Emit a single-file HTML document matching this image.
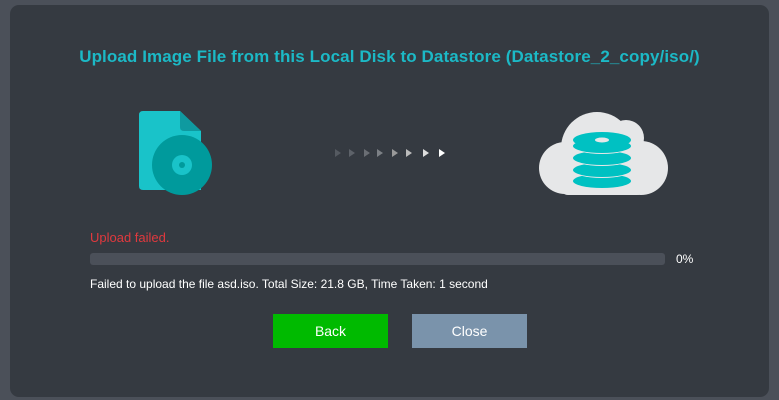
<!DOCTYPE html>
<html><head><style>
body{margin:0;width:779px;height:400px;background:#4b5059;font-family:"Liberation Sans",sans-serif;overflow:hidden;position:relative}
.dlg{position:absolute;left:10px;top:5px;width:759px;height:392px;background:#353a41;border-radius:9px}
.t{position:absolute;left:0;width:779px;top:47px;text-align:center;color:#1cb9c6;font-weight:bold;font-size:17px;letter-spacing:0.1px}
.a{position:absolute;top:149px;width:0;height:0;border-top:4px solid transparent;border-bottom:4px solid transparent;border-left:6px solid #fff}
</style></head><body>
<div class="dlg"></div>
<div class="t">Upload Image File from this Local Disk to Datastore (Datastore_2_copy/iso/)</div>
<svg style="position:absolute;left:0;top:0" width="779" height="400">
<path d="M143 111 H180 L201 131 V190 H143 Q139 190 139 186 V115 Q139 111 143 111Z" fill="#19c3c9"/>
<path d="M180 111 L201 131 H184 Q180 131 180 127Z" fill="#0f9aa0"/>
<ellipse cx="182" cy="165" rx="30" ry="30" fill="#009a9c"/>
<circle cx="182" cy="165" r="10" fill="#19c3c9"/>
<circle cx="182" cy="165" r="3" fill="#009a9c"/>
<g fill="#e6e7e8">
<circle cx="565" cy="168" r="26"/>
<circle cx="597" cy="148" r="36"/>
<circle cx="626" cy="138" r="18"/>
<circle cx="641" cy="168" r="27"/>
<rect x="560" y="160" width="85" height="35" rx="8"/>
</g>
<ellipse cx="602" cy="181" rx="29" ry="7" fill="#00c1c2"/>
<ellipse cx="602" cy="170" rx="30" ry="8" fill="#e6e7e8"/>
<ellipse cx="602" cy="170" rx="29" ry="7" fill="#00c1c2"/>
<ellipse cx="602" cy="158" rx="30" ry="8" fill="#e6e7e8"/>
<ellipse cx="602" cy="158" rx="29" ry="7" fill="#00c1c2"/>
<ellipse cx="602" cy="146" rx="30" ry="8" fill="#e6e7e8"/>
<ellipse cx="602" cy="146" rx="29" ry="7" fill="#00c1c2"/>
<ellipse cx="602" cy="140" rx="29" ry="8" fill="#00c1c2"/>
<ellipse cx="602" cy="140" rx="7" ry="2.5" fill="#e6e7e8"/>
</svg>
<div class="a" style="left:335px;border-left-color:#555a61"></div>
<div class="a" style="left:349px;border-left-color:#5d6269"></div>
<div class="a" style="left:364px;border-left-color:#6a6e74"></div>
<div class="a" style="left:377px;border-left-color:#7c8085"></div>
<div class="a" style="left:392px;border-left-color:#999"></div>
<div class="a" style="left:406px;border-left-color:#bbb"></div>
<div class="a" style="left:423px;border-left-color:#ddd"></div>
<div class="a" style="left:439px;border-left-color:#fff"></div>
<div style="position:absolute;left:90px;top:230px;color:#e0393e;font-size:13px">Upload failed.</div>
<div style="position:absolute;left:90px;top:253px;width:575px;height:12px;background:#4b5059;border-radius:3px"></div>
<div style="position:absolute;left:676px;top:252px;color:#fff;font-size:12px">0%</div>
<div style="position:absolute;left:90px;top:277px;color:#fff;font-size:12px">Failed to upload the file asd.iso. Total Size: 21.8 GB, Time Taken: 1 second</div>
<div style="position:absolute;left:273px;top:314px;width:115px;height:34px;background:#00ba00;color:#fff;font-size:14px;text-align:center;line-height:34px">Back</div>
<div style="position:absolute;left:412px;top:314px;width:115px;height:34px;background:#7a93ab;color:#fff;font-size:14px;text-align:center;line-height:34px">Close</div>
</body></html>
